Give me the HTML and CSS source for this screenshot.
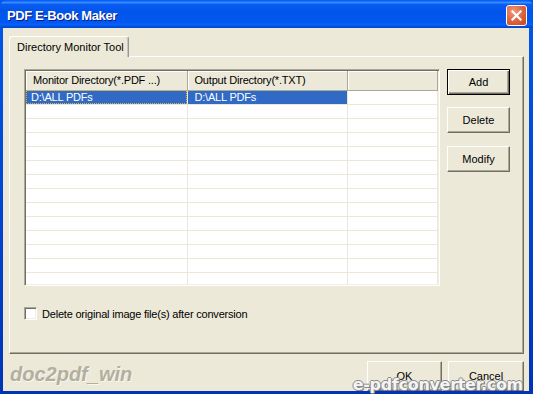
FILE: index.html
```html
<!DOCTYPE html>
<html>
<head>
  <link rel="stylesheet" href="styles.css">
</head>
<body>
  <div class="window">
    <div class="titlebar">
      <span class="title">PDF E-Book Maker</span>
      <span class="close-btn">
        <svg width="11" height="11" viewBox="0 0 11 11">
          <path d="M1.5 1.5 L9.5 9.5 M9.5 1.5 L1.5 9.5" stroke="#fff" stroke-width="2.2" stroke-linecap="square"/>
        </svg>
      </span>
    </div>

    <div class="client">
      <div class="tabs">
        <div class="tab">Directory Monitor Tool</div>
      </div>

      <div class="panel">
        <div class="panel-main">
          <div class="listview">
            <table class="grid">
              <thead>
                <tr>
                  <th class="col1">Monitor Directory(*.PDF ...)</th>
                  <th class="col2">Output Directory(*.TXT)</th>
                  <th class="col3"></th>
                </tr>
              </thead>
              <tbody>
                <tr class="selected">
                  <td class="first">D:\ALL PDFs</td>
                  <td>D:\ALL PDFs</td>
                  <td></td>
                </tr>
                <tr><td></td><td></td><td></td></tr>
                <tr><td></td><td></td><td></td></tr>
                <tr><td></td><td></td><td></td></tr>
                <tr><td></td><td></td><td></td></tr>
                <tr><td></td><td></td><td></td></tr>
                <tr><td></td><td></td><td></td></tr>
                <tr><td></td><td></td><td></td></tr>
                <tr><td></td><td></td><td></td></tr>
                <tr><td></td><td></td><td></td></tr>
                <tr><td></td><td></td><td></td></tr>
                <tr><td></td><td></td><td></td></tr>
                <tr><td></td><td></td><td></td></tr>
                <tr><td></td><td></td><td></td></tr>
              </tbody>
            </table>
          </div>

          <div class="side-buttons">
            <button class="btn default">Add</button>
            <button class="btn">Delete</button>
            <button class="btn">Modify</button>
          </div>
        </div>

        <label class="check-row">
          <span class="checkbox"></span>
          Delete original image file(s) after conversion
        </label>
      </div>

      <div class="footer">
        <span class="brand">doc2pdf_win</span>
        <div class="footer-buttons">
          <button class="btn ok">OK</button>
          <button class="btn cancel">Cancel</button>
        </div>
      </div>

      <div class="watermark">e-pdfconverter.com</div>
    </div>
  </div>
</body>
</html>
```

FILE: styles.css
```css
* {
  box-sizing: border-box;
}

body {
  margin: 0;
  font-family: "Liberation Sans", Arial, sans-serif;
  font-size: 11px;
  color: #000;
  background: #0831d9;
}

.window {
  width: 533px;
  height: 394px;
  display: flex;
  flex-direction: column;
  background: linear-gradient(to bottom, #0058ee 0%, #0043cf 60%, #0034b8 100%);
}

/* title bar */
.titlebar {
  height: 28px;
  flex: none;
  display: flex;
  align-items: center;
  justify-content: space-between;
  padding: 0 6px 0 7px;
  border-radius: 7px 7px 0 0;
  background: linear-gradient(to bottom,
    #0a61ff 0%, #0a5ef8 4%, #3d95ff 8%, #0a5cf0 16%,
    #0155eb 40%, #0258ee 80%, #0561ff 88%, #0252de 94%, #0146c8 100%);
}

.title {
  color: #fff;
  font-weight: bold;
  font-size: 13px;
  letter-spacing: -0.4px;
  text-shadow: 1px 1px 0 #0a1883;
  margin-top: 2px;
}

.close-btn {
  width: 21px;
  height: 21px;
  margin-top: 2px;
  border: 1px solid #fff;
  border-radius: 3px;
  display: flex;
  align-items: center;
  justify-content: center;
  background: radial-gradient(circle at 35% 30%, #f09b7d 0%, #e06a45 45%, #c94316 100%);
}

/* client area */
.client {
  position: relative;
  flex: 1;
  margin: 0 4px 4px 3px;
  background: #ece9d8;
  padding: 8px 5px 0 6px;
  display: flex;
  flex-direction: column;
}

.tabs {
  display: flex;
  height: 20px;
  position: relative;
  z-index: 1;
}

.tab {
  width: 120px;
  height: 21px;
  padding: 4px 0 0 7px;
  background: #ece9d8;
  border: 1px solid #fff;
  border-bottom: none;
  border-right: 1px solid #919b9c;
  border-radius: 3px 3px 0 0;
  box-shadow: inset -1px 0 0 #c7c4b8;
}

.panel {
  height: 298px;
  flex: none;
  border: 1px solid #fff;
  border-right-color: #716f64;
  border-bottom-color: #716f64;
  box-shadow: inset -1px -1px 0 #aca899;
  padding: 12px 0 0 14px;
}

.panel-main {
  display: flex;
  gap: 7px;
}

/* list view */
.listview {
  width: 416px;
  height: 217px;
  overflow: hidden;
  background: #fff;
  border: 1px solid #aca899;
  border-right-color: #fff;
  border-bottom-color: #fff;
  box-shadow: inset 1px 1px 0 #716f64, inset -1px -1px 0 #f1efe2;
  padding: 1px;
}

.grid {
  border-collapse: collapse;
  width: 100%;
  table-layout: fixed;
}

.grid th {
  height: 19px;
  font-weight: normal;
  text-align: left;
  padding: 0 0 0 7px;
  background: #ece9d8;
  border-right: 1px solid #aca899;
  border-bottom: 1px solid #aca899;
  box-shadow: inset 1px 1px 0 #fff;
  white-space: nowrap;
  overflow: hidden;
  letter-spacing: -0.2px;
}

.grid .col1 { width: 161px; }
.grid .col2 { width: 160px; }

.grid td {
  height: 14px;
  padding: 0 0 0 7px;
  border-right: 1px solid #ebe8d7;
  border-bottom: 1px solid #ebe8d7;
  white-space: nowrap;
  line-height: 12px;
  letter-spacing: -0.2px;
}

.grid td.first {
  padding-left: 5px;
}

.grid tr.selected td:nth-child(-n+2) {
  background: #316ac5;
  color: #fff;
}

.grid tr.selected td.first {
  outline: 1px dotted #d9b44a;
  outline-offset: -1px;
}

/* buttons */
.side-buttons {
  display: flex;
  flex-direction: column;
  gap: 12px;
}

.btn {
  width: 63px;
  height: 26px;
  padding: 0;
  font-family: inherit;
  font-size: 11px;
  color: #000;
  background: #ece9d8;
  border: 1px solid #fff;
  border-right-color: #716f64;
  border-bottom-color: #716f64;
  box-shadow: inset -1px -1px 0 #aca899;
}

.btn.default {
  border: 1px solid #000;
  box-shadow: inset 1px 1px 0 #fff, inset -1px -1px 0 #716f64, inset -2px -2px 0 #aca899;
}

.side-buttons .btn:nth-child(3) {
  margin-top: 1px;
}

/* checkbox */
.check-row {
  display: flex;
  align-items: center;
  gap: 5px;
  margin-top: 21px;
  letter-spacing: -0.2px;
}

.checkbox {
  width: 13px;
  height: 13px;
  background: #fff;
  border: 1px solid #aca899;
  border-right-color: #fff;
  border-bottom-color: #fff;
  box-shadow: inset 1px 1px 0 #716f64, inset -1px -1px 0 #f1efe2;
}

/* footer */
.footer {
  flex: 1;
  display: flex;
  justify-content: space-between;
  align-items: flex-start;
  padding: 7px 0 0 1px;
  overflow: hidden;
}

.brand {
  font-size: 20px;
  font-weight: bold;
  font-style: italic;
  color: #b3af9f;
  text-shadow: 1px 1px 0 #f8f7f0;
  margin-top: 2px;
}

.footer-buttons {
  display: flex;
  gap: 6px;
}

.btn.ok {
  width: 75px;
  height: 30px;
}

.btn.cancel {
  width: 76px;
  height: 30px;
}

/* site stamp printed over the dialog buttons */
.watermark {
  position: absolute;
  right: 6px;
  bottom: -3px;
  font-family: "DejaVu Sans", Verdana, sans-serif;
  font-size: 16px;
  font-weight: bold;
  letter-spacing: -0.3px;
  color: #f4f4f4;
  text-shadow: -1px 0 0 #8a8a8a, 1px 0 0 #8a8a8a, 0 -1px 0 #8a8a8a, 0 1px 0 #8a8a8a, 1px 1px 0 #555;
}
```
